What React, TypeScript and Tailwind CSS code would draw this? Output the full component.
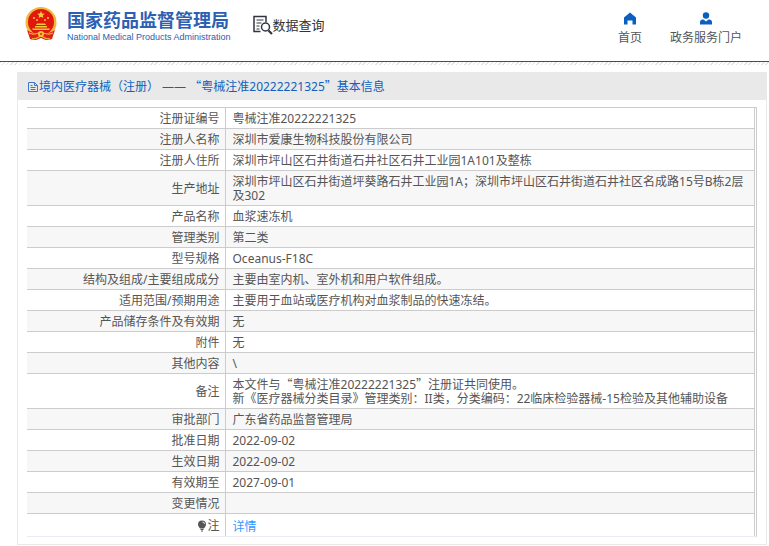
import React from 'react';

const RECORD_NO = '粤械注准20222221325';

const ROWS: { label: string; value: React.ReactNode }[] = [
  { label: '注册证编号', value: RECORD_NO },
  { label: '注册人名称', value: '深圳市爱康生物科技股份有限公司' },
  { label: '注册人住所', value: '深圳市坪山区石井街道石井社区石井工业园1A101及整栋' },
  {
    label: '生产地址',
    value: '深圳市坪山区石井街道坪葵路石井工业园1A；深圳市坪山区石井街道石井社区名成路15号B栋2层及302',
  },
  { label: '产品名称', value: '血浆速冻机' },
  { label: '管理类别', value: '第二类' },
  { label: '型号规格', value: 'Oceanus-F18C' },
  { label: '结构及组成/主要组成成分', value: '主要由室内机、室外机和用户软件组成。' },
  { label: '适用范围/预期用途', value: '主要用于血站或医疗机构对血浆制品的快速冻结。' },
  { label: '产品储存条件及有效期', value: '无' },
  { label: '附件', value: '无' },
  { label: '其他内容', value: '\\' },
  {
    label: '备注',
    value: (
      <>
        本文件与<Quoted>{RECORD_NO}</Quoted>注册证共同使用。
        <br />
        新《医疗器械分类目录》管理类别：II类，分类编码：22临床检验器械-15检验及其他辅助设备
      </>
    ),
  },
  { label: '审批部门', value: '广东省药品监督管理局' },
  { label: '批准日期', value: '2022-09-02' },
  { label: '生效日期', value: '2022-09-02' },
  { label: '有效期至', value: '2027-09-01' },
  { label: '变更情况', value: '' },
];

// Full-width quotation marks around a latin/chinese mix
function Quoted({ children }: { children: React.ReactNode }) {
  return (
    <>
      <span className="font-['Noto_Sans_CJK_SC',sans-serif] leading-none">“</span>
      {children}
      <span className="font-['Noto_Sans_CJK_SC',sans-serif] leading-none">”</span>
    </>
  );
}

function Emblem() {
  return (
    <svg viewBox="0 0 34 36" className="h-9 w-[34px]" aria-hidden="true">
      <circle cx="17" cy="16.500" r="15.500" fill="#f0b83a" />
      <circle cx="17" cy="16" r="13" fill="#e2180f" />
      <path d="M17 5l1.100 2.400 2.600.3-1.900 1.800.5 2.600-2.300-1.300-2.300 1.300.5-2.600-1.900-1.800 2.600-.3z" fill="#f9c838" />
      <g fill="#f9c838">
        <circle cx="10" cy="12" r="1" />
        <circle cx="13" cy="14" r="1" />
        <circle cx="21" cy="14" r="1" />
        <circle cx="24" cy="12" r="1" />
        <path d="M13 17.500h8l1 1.500H12zM11 20h12v1.500H11zM8 22.500h18L25 24H9z" />
      </g>
      <path d="M3 24c4 3 9 4 14 2 5 2 10 1 14-2l-3 9c-4 2-7 1-11-1-4 2-7 3-11 1z" fill="#dc2418" />
      <path d="M5 27c4 2 8 1 12-1 4 2 8 3 12 1M8 33c3 0 6-1 9-3 3 2 6 3 9 3" fill="none" stroke="#f2b632" strokeWidth="1.300" />
      <circle cx="17" cy="28" r="3" fill="#f4be38" />
      <circle cx="17" cy="28" r="1" fill="#e2231a" />
    </svg>
  );
}

function SearchDocIcon() {
  return (
    <svg viewBox="0 0 20 20" className="h-5 w-5" fill="none" stroke="#333344" aria-hidden="true">
      <path d="M7.500 16.500H1V1.500h12V7" strokeWidth="1.500" />
      <path d="M3.500 5h7M3.500 8h5M3.500 11h3M3.500 14h3" />
      <circle cx="12.500" cy="12" r="4" strokeWidth="1.500" />
      <path d="M15.500 15.500l3.500 3.500" strokeWidth="2.200" />
    </svg>
  );
}

function DocIcon() {
  return (
    <svg viewBox="0 0 12 12" className="h-3 w-3" fill="none" stroke="#3f78c8" aria-hidden="true">
      <path d="M1.500 1.500h6l3 3v6h-9zM7.500 1.500v3h3M3.500 4.500h2M3.500 6.500h5M3.500 8.500h5" />
    </svg>
  );
}

function BulbIcon() {
  return (
    <svg viewBox="0 0 10 12" className="h-3 w-[10px]" aria-hidden="true">
      <path d="M5 .5a4 4 0 0 0-4 4c0 2 1.500 2.800 2 4h4c.5-1.200 2-2 2-4a4 4 0 0 0-4-4z" fill="#555" />
      <path d="M3.500 9h3v1h-3zM4 10.500h2v1H4z" fill="#555" />
      <path d="M5.500 2a2 2 0 0 1 2 2" fill="none" stroke="#fff" strokeWidth=".8" />
    </svg>
  );
}

function Header() {
  return (
    <header>
      <div className="flex h-[61px] items-start justify-between pr-[27px] pl-6">
        <div className="flex items-start">
          <a href="#" className="flex items-start gap-2 pt-1.5 text-[#2d60b3]">
            <Emblem />
            <span className="flex flex-col pt-1 pl-px">
              <span className="text-lg leading-5 font-bold">国家药品监督管理局</span>
              <span className="pt-px font-['Liberation_Sans',sans-serif] text-[9px] leading-3">
                National Medical Products Administration
              </span>
            </span>
          </a>
          <a href="#" className="ml-[22px] flex items-center pt-[15px] text-[13px] leading-5 text-[#333]">
            <SearchDocIcon />
            数据查询
          </a>
        </div>
        <nav className="flex gap-7 pt-3 text-[#555]">
          <a href="#" className="flex flex-col items-center gap-[5px]">
            <svg viewBox="0 0 14 13" className="h-[13px] w-[14px]" fill="#0b5fc0" aria-hidden="true">
              <path d="M7 .5L1 5.500V12.500h3.500V8.500h5v4H13V5.500z" />
            </svg>
            <span className="leading-4">首页</span>
          </a>
          <a href="#" className="flex flex-col items-center gap-[5px]">
            <svg viewBox="0 0 14 13" className="h-[13px] w-[14px]" fill="#0b5fc0" aria-hidden="true">
              <circle cx="7" cy="3.500" r="3.200" />
              <path d="M1 12.500V10c0-2 2-2.500 3.500-2.500L7 9.500l2.500-2c1.500 0 3.500.5 3.500 2.500v2.500z" />
            </svg>
            <span className="leading-4">政务服务门户</span>
          </a>
        </nav>
      </div>
      <div className="h-px bg-[#0b5aab]" />
      <div className="h-[3px] bg-[repeating-linear-gradient(135deg,#e4e4e4_0_1px,#fff_1px_3px)]" />
    </header>
  );
}

export default function App() {
  return (
    <div className="bg-white font-['Noto_Sans','Noto_Sans_CJK_SC',sans-serif] text-xs text-[#555]">
      <Header />

      <main className="mt-[7px] mr-0.5 ml-[17px] border border-[#e9e9e9]">
        <h1 className="flex h-[27px] items-center bg-[#e9e9e9] pl-[9px] text-[#1160bd]">
          <DocIcon />
          <span>
            境内医疗器械（注册） —— <Quoted>{RECORD_NO}</Quoted>基本信息
          </span>
        </h1>

        <div className="mx-[9px] my-[7px] border-t border-r border-b border-t-[#ccc] border-r-[#ccc] border-b-[#ebebf5] pr-px">
          <table className="w-full border-collapse leading-[14px]">
            <tbody>
              {ROWS.map((row) => (
                <tr key={row.label} className="border-b border-[#ccc] even:bg-[#f7f7f7]">
                  <th scope="row" className="w-[198px] pt-1 pr-[5px] pb-0.5 text-right font-normal">
                    {row.label}
                  </th>
                  <td className="border-x border-[#ccc] pt-1 pr-[5px] pb-0.5 pl-[7px]">{row.value}</td>
                </tr>
              ))}
              <tr>
                <th scope="row" className="pt-[5px] pr-[5px] pb-[3px] font-normal">
                  <span className="flex items-center justify-end">
                    <BulbIcon />注
                  </span>
                </th>
                <td className="border-x border-[#ccc] pt-1.5 pr-[5px] pb-0.5 pl-[7px]">
                  <a href="#" className="text-[#3399ff]">详情</a>
                </td>
              </tr>
            </tbody>
          </table>
        </div>
      </main>
    </div>
  );
}
